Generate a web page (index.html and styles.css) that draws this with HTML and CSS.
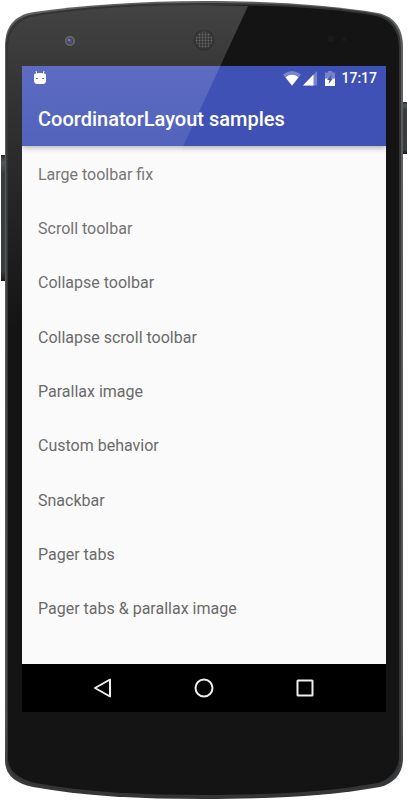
FILE: index.html
```html
<!DOCTYPE html>
<html lang="en">
<head>
    <meta charset="UTF-8">
    <meta name="viewport" content="width=device-width, initial-scale=1.0">
    <title>CoordinatorLayout samples</title>
    <link rel="stylesheet" href="styles.css">
</head>
<body>
    <div class="phone">
        <!-- phone body -->
        <svg class="phone-art" viewBox="0 0 408 800" preserveAspectRatio="none" aria-hidden="true">
            <defs>
                <linearGradient id="key" x1="0" y1="0" x2="0" y2="1">
                    <stop offset="0" stop-color="#2a2c2d"/>
                    <stop offset="0.06" stop-color="#555859"/>
                    <stop offset="0.15" stop-color="#393c3d"/>
                    <stop offset="0.92" stop-color="#3a3d3e"/>
                    <stop offset="1" stop-color="#191919"/>
                </linearGradient>
                <linearGradient id="rim" x1="0" y1="0" x2="0" y2="1">
                    <stop offset="0" stop-color="#5e6062"/>
                    <stop offset="0.9" stop-color="#505254"/>
                    <stop offset="1" stop-color="#333435"/>
                </linearGradient>
                <pattern id="mesh" width="3" height="3" patternUnits="userSpaceOnUse">
                    <rect width="3" height="3" fill="#0c0c0c"/>
                    <circle cx="1.5" cy="1.5" r="0.9" fill="#4a4a4a"/>
                </pattern>
            </defs>
            <rect x="1" y="155" width="6" height="126" fill="url(#key)"/>
            <rect x="402" y="102" width="5" height="52" fill="url(#key)"/>
            <path d="M5 46C5 27 14 15 34 12C85 5 140 1 204 1C272 1 330 5 378 13C396 17 403 30 403 47V758C403 773 395 783 380 787C330 796 270 799 204 799C140 799 82 796 33 787C15 783 5 775 5 760Z" fill="url(#rim)"/>
            <path d="M6 47C6 29 15 17 35 14C86 6 140 3 204 3C272 3 330 6 377 14C394 18 401 31 401 48V757C401 771 393 781 379 785C329 794 270 797 204 797C140 797 83 794 34 785C17 781 7 773 7 759Z" fill="#343536"/>
            <path d="M8 49C8 31 17 19 36 16C87 8 140 5 204 5C272 5 330 8 376 16C392 20 399 32 399 49V756C399 769 391 779 378 783C328 792 270 795 204 795C140 795 84 792 35 783C19 779 8 771 8 758Z" fill="#141414"/>
            <circle cx="204" cy="40" r="10.5" fill="#080808"/>
            <circle cx="204" cy="40" r="8.5" fill="url(#mesh)"/>
            <circle cx="331" cy="39" r="3.5" fill="#1c1919"/>
            <circle cx="344" cy="39" r="2.5" fill="#1c1919"/>
            <circle cx="70" cy="41" r="5" fill="#4d4d4d"/>
            <circle cx="70" cy="41" r="3.5" fill="#22222c"/>
            <circle cx="70" cy="41" r="2" fill="#2b2b9c"/>
            <circle cx="69" cy="40" r="0.8" fill="#aaaadd"/>
        </svg>

        <div class="screen">
            <header class="app-bar">
                <div class="status-bar">
                    <svg class="robot-icon" width="14" height="14" viewBox="0 0 14 14" aria-hidden="true">
                        <path d="M3 0L4 3M11 0L10 3" stroke="#fff" stroke-width="1"/>
                        <path d="M2 2.5Q7 1.5 12 2.5Q13 3 13 4.5V9.5Q13 13 9.5 13H4.5Q1 13 1 9.5V4.5Q1 3 2 2.5Z" fill="#fff"/>
                        <rect x="3" y="7" width="2" height="1" fill="#5261bb"/>
                        <rect x="9" y="7" width="2" height="1" fill="#5261bb"/>
                    </svg>
                    <div class="status-icons">
                        <svg width="18" height="15" viewBox="0 0 18 15" aria-hidden="true">
                            <path d="M0 3.5Q9 -3.5 18 3.5L9 15Z" fill="#fff" opacity="0.3"/>
                            <path d="M2.5 6.2Q9 1.5 15.5 6.2L9 14.5Z" fill="#fff"/>
                        </svg>
                        <svg width="14" height="15" viewBox="0 0 14 15" aria-hidden="true">
                            <path d="M14 0V14.5H0Z" fill="#fff" opacity="0.3"/>
                            <path d="M10.5 3.6V14.5H0Z" fill="#fff"/>
                        </svg>
                        <svg class="battery-icon" width="10" height="15" viewBox="0 0 10 15" aria-hidden="true">
                            <path d="M3 0H7V1.5H10V7.5H0V1.5H3Z" fill="#fff" opacity="0.3"/>
                            <path d="M0 7.5H10V15H0Z" fill="#fff"/>
                            <path d="M7 3L2 9H4.5L3.5 13L8 7.5H5.5Z" fill="#3f51b5"/>
                        </svg>
                        <time class="clock">17:17</time>
                    </div>
                </div>
                <h1 class="title">CoordinatorLayout samples</h1>
            </header>

            <ul class="samples">
                <li><a href="#">Large toolbar fix</a></li>
                <li><a href="#">Scroll toolbar</a></li>
                <li><a href="#">Collapse toolbar</a></li>
                <li><a href="#">Collapse scroll toolbar</a></li>
                <li><a href="#">Parallax image</a></li>
                <li><a href="#">Custom behavior</a></li>
                <li><a href="#">Snackbar</a></li>
                <li><a href="#">Pager tabs</a></li>
                <li><a href="#">Pager tabs &amp; parallax image</a></li>
            </ul>

            <nav class="nav-bar">
                <button type="button" aria-label="Back">
                    <svg width="20" height="20" viewBox="0 0 20 20"><path d="M17 1.5V18.5L2 10Z" fill="none" stroke="#eee" stroke-width="2" stroke-linejoin="round"/></svg>
                </button>
                <button type="button" aria-label="Home">
                    <svg width="20" height="20" viewBox="0 0 20 20"><circle cx="10" cy="10" r="8.5" fill="none" stroke="#eee" stroke-width="2"/></svg>
                </button>
                <button type="button" aria-label="Recent apps">
                    <svg width="20" height="20" viewBox="0 0 20 20"><rect x="2.5" y="2.5" width="15" height="15" rx="0.5" fill="none" stroke="#eee" stroke-width="2"/></svg>
                </button>
            </nav>
        </div>

        <!-- light on the glass -->
        <svg class="phone-art glare" viewBox="0 0 408 800" preserveAspectRatio="none" aria-hidden="true">
            <defs>
                <linearGradient id="shine" x1="0" y1="0" x2="0" y2="1">
                    <stop offset="0" stop-color="#fff" stop-opacity="0.2"/>
                    <stop offset="0.3" stop-color="#fff" stop-opacity="0.13"/>
                    <stop offset="1" stop-color="#fff" stop-opacity="0"/>
                </linearGradient>
            </defs>
            <path d="M8 49C8 31 17 19 36 16C87 8 140 5 204 5L248 6L98 330H8Z" fill="url(#shine)"/>
        </svg>
    </div>
</body>
</html>
```

FILE: styles.css
```css
* {
    box-sizing: border-box;
}
body {
    margin: 0;
    background-color: #fff;
    font-family: Roboto, "Noto Sans", sans-serif;
}
.phone {
    position: relative;
    display: flex;
    min-height: 100vh;
    padding: 66px 22px 88px;
}
.phone-art {
    position: absolute;
    top: 0;
    left: 0;
    width: 100%;
    height: 100%;
}
.glare {
    z-index: 2;
    pointer-events: none;
}
.screen {
    position: relative;
    z-index: 1;
    flex: 1;
    display: flex;
    flex-direction: column;
    background-color: #fafafa;
}
.app-bar {
    position: relative;
    background-color: #3f51b5;
    color: #fff;
    box-shadow: 0 2px 5px rgba(0, 0, 0, 0.3);
    clip-path: inset(0 0 -10px 0);
}
.status-bar {
    display: flex;
    justify-content: space-between;
    align-items: center;
    height: 24px;
    padding: 0 9px 0 11px;
}
.status-icons {
    display: flex;
    align-items: center;
    gap: 2px;
}
.battery-icon {
    margin: 0 4px 0 6px;
}
.clock {
    font-size: 14px;
    font-weight: 500;
    line-height: 24px;
}
.title {
    margin: 0;
    padding: 2px 16px 0;
    font-size: 20px;
    font-weight: 500;
    line-height: 54px;
}
.samples {
    flex: 1;
    display: flex;
    flex-direction: column;
    margin: 0;
    padding: 1px 0 28px;
    list-style: none;
}
.samples li {
    flex: 1;
    display: flex;
}
.samples a {
    flex: 1;
    display: flex;
    align-items: center;
    padding: 0 16px;
    color: #6a6a6a;
    font-size: 16px;
    text-decoration: none;
}
.nav-bar {
    display: flex;
    height: 48px;
    padding: 0 30px;
    background-color: #000;
}
.nav-bar button {
    flex: 1;
    display: flex;
    justify-content: center;
    align-items: center;
    padding: 0;
    border: none;
    background: none;
    cursor: pointer;
}
```
